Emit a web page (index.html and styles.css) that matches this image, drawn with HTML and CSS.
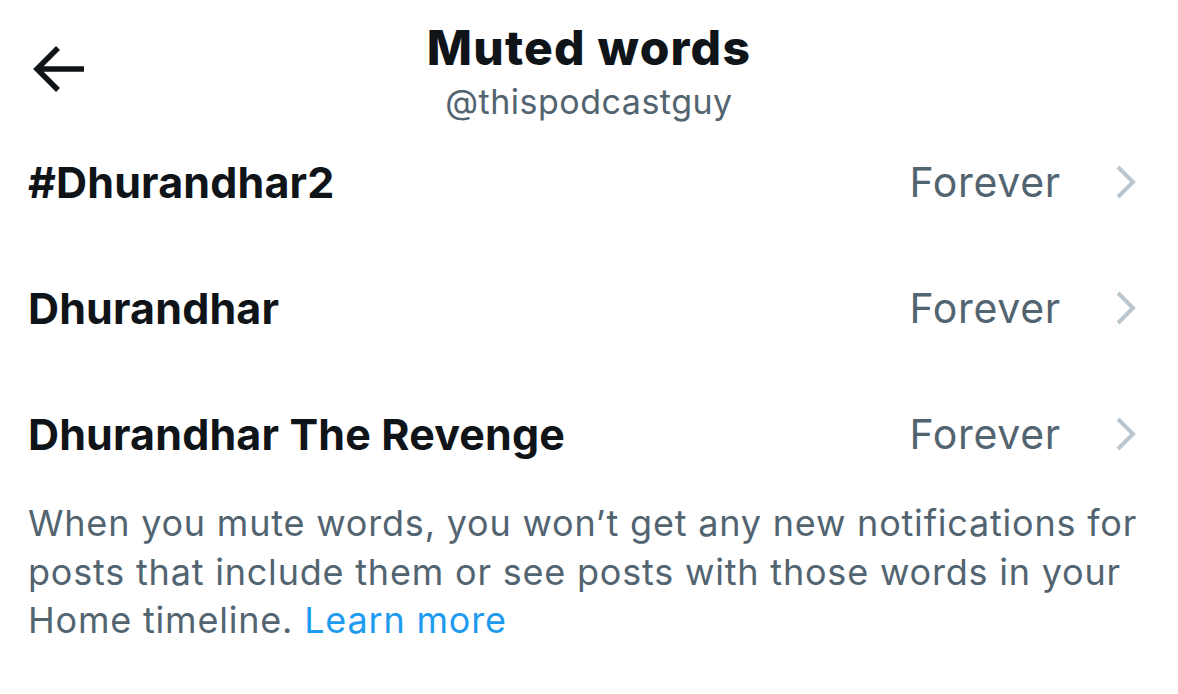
FILE: index.html
```html
<!DOCTYPE html>
<html>
<head>
<meta charset="utf-8">
<link rel="stylesheet" href="styles.css">
</head>
<body>
<div class="page">
  <header class="header">
    <div class="back">
      <svg width="60" height="60" viewBox="0 0 60 60"><path d="M54 30H8M28 9L7 30l21 21" fill="none" stroke="#0f1419" stroke-width="5.5"/></svg>
    </div>
    <div class="titles">
      <div class="title">Muted words</div>
      <div class="handle">@thispodcastguy</div>
    </div>
    <div></div>
  </header>
  <div class="list">
    <div class="row"><span class="word">#Dhurandhar2</span><span class="dur">Forever</span><svg class="chev" width="24" height="36" viewBox="0 0 24 36"><path d="M4 3l15 15L4 33" fill="none" stroke="#b9c6ce" stroke-width="4"/></svg></div>
    <div class="row"><span class="word">Dhurandhar</span><span class="dur">Forever</span><svg class="chev" width="24" height="36" viewBox="0 0 24 36"><path d="M4 3l15 15L4 33" fill="none" stroke="#b9c6ce" stroke-width="4"/></svg></div>
    <div class="row"><span class="word">Dhurandhar The Revenge</span><span class="dur">Forever</span><svg class="chev" width="24" height="36" viewBox="0 0 24 36"><path d="M4 3l15 15L4 33" fill="none" stroke="#b9c6ce" stroke-width="4"/></svg></div>
  </div>
  <p class="note">When you mute words, you won’t get any new notifications for posts that include them or see posts with those words in your Home timeline. <a class="link">Learn more</a></p>
</div>
</body>
</html>
```
FILE: styles.css
```css
html, body {
  margin: 0;
  padding: 0;
  background: #ffffff;
}
body {
  font-family: Inter, "Noto Sans", sans-serif;
  color: #0f1419;
  width: 1178px;
  height: 694px;
  overflow: hidden;
}
.header {
  display: grid;
  grid-template-columns: 1fr auto 1fr;
  height: 119px;
  padding-top: 20px;
  box-sizing: border-box;
}
.back {
  padding-left: 30px;
  padding-top: 19px;
}
.back svg { display: block; }
.titles {
  display: flex;
  flex-direction: column;
  align-items: center;
}
.title {
  font-size: 48px;
  font-weight: 800;
  line-height: 56px;
  letter-spacing: 1.2px;
}
.handle {
  font-size: 34px;
  line-height: 34px;
  margin-top: 9px;
  color: #536471;
  letter-spacing: 0.5px;
}
.row {
  height: 126px;
  display: flex;
  align-items: center;
  padding: 0 40px 0 28px;
}
.word {
  font-size: 43px;
  font-weight: 700;
  flex: 1;
  letter-spacing: 0.15px;
}
.dur {
  font-size: 41px;
  color: #536471;
  margin-right: 53px;
  letter-spacing: 0.7px;
}
.chev { display: block; }
.note {
  margin: 2px 0 0;
  padding: 0 20px 0 28px;
  font-size: 36px;
  line-height: 48.5px;
  color: #536471;
  letter-spacing: 0.8px;
}
.link {
  color: #1d9bf0;
}
```
